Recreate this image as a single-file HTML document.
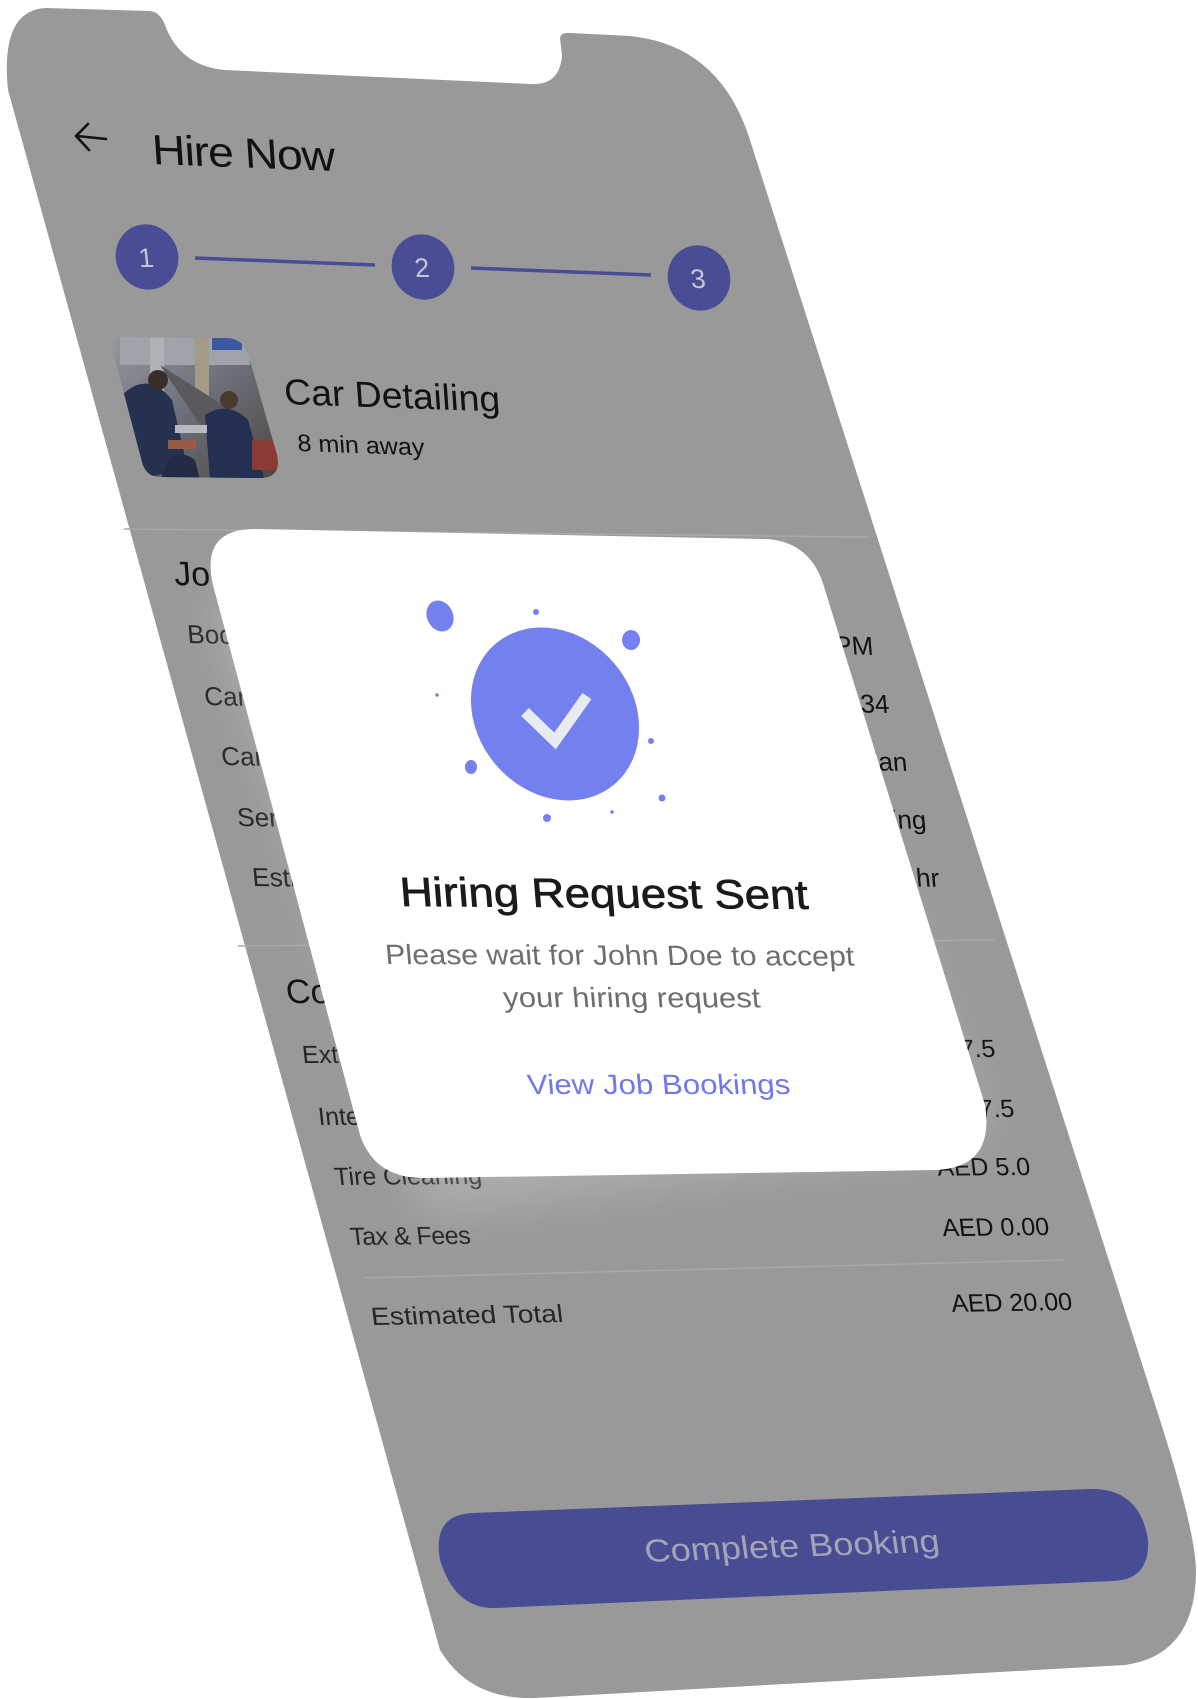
<!DOCTYPE html>
<html><head><meta charset="utf-8"><style>
html,body{margin:0;padding:0;background:#fff;width:1198px;height:1699px;overflow:hidden}
svg{display:block}
text{font-family:"Liberation Sans",sans-serif}
</style></head><body>
<svg width="1198" height="1699" viewBox="0 0 1198 1699" xmlns="http://www.w3.org/2000/svg">
<defs>
<filter id="blur" x="-20%" y="-20%" width="140%" height="140%"><feGaussianBlur stdDeviation="24"/></filter>
<clipPath id="imgclip"><path d="M118 337 L228 338 Q244 339 249 357 L277 455 Q282 478 260 478 L160 477 Q146 477 142 462 L113 352 Q110 337 118 337 Z"/></clipPath>
<linearGradient id="imgbg" x1="0" y1="0" x2="1" y2="1">
<stop offset="0" stop-color="#9a9ca2"/><stop offset="0.5" stop-color="#6a6e78"/><stop offset="1" stop-color="#4a4036"/>
</linearGradient>
</defs>

<!-- phone body -->
<path d="M46 8 L150 11 Q160 12 165 25 Q180 66 225 70 L530 84 Q560 86 562 55 L560 38 Q561 32 570 33 L630 36 Q720 45 750 140 L1160 1420 Q1195 1530 1196 1570 Q1196 1655 1125 1665 L535 1698 Q470 1700 440 1650 L8 90 Q0 10 46 8 Z" fill="#999999"/>

<!-- header -->
<g stroke="#111" stroke-width="2.6" fill="none" stroke-linecap="round" stroke-linejoin="round">
<path d="M106 139 L77 136 M88 124 L76 136 L89 150"/>
</g>
<text transform="translate(153,164) rotate(2.2) skewX(6)" font-size="42" fill="#111" textLength="182" lengthAdjust="spacingAndGlyphs" letter-spacing="-1">Hire Now</text>

<!-- steps -->
<g stroke="#484d95" stroke-width="3.5">
<line x1="195" y1="258" x2="375" y2="265"/>
<line x1="471" y1="268" x2="651" y2="275"/>
</g>
<g fill="#484d95">
<ellipse cx="147" cy="257" rx="31" ry="33" transform="rotate(-25 147 257)"/>
<ellipse cx="423" cy="267" rx="31" ry="33" transform="rotate(-25 423 267)"/>
<ellipse cx="699" cy="278" rx="31" ry="33" transform="rotate(-25 699 278)"/>
</g>
<g fill="#c4c5d4" font-size="27" text-anchor="middle">
<text transform="translate(147,267) skewX(6)">1</text>
<text transform="translate(423,277) skewX(6)">2</text>
<text transform="translate(699,288) skewX(6)">3</text>
</g>

<!-- image -->
<g clip-path="url(#imgclip)">
<rect x="100" y="330" width="190" height="160" fill="url(#imgbg)"/>
<rect x="120" y="335" width="130" height="30" fill="#9fa3aa"/>
<rect x="150" y="335" width="14" height="60" fill="#b0b1b5"/>
<rect x="195" y="335" width="14" height="70" fill="#a49a88"/>
<rect x="212" y="338" width="30" height="12" fill="#3a5aa0"/>
<path d="M160 365 L215 400 L240 420 L200 425 Z" fill="#5a5a5e"/>
<path d="M122 395 Q148 370 172 400 L188 470 L140 478 Z" fill="#263050"/>
<circle cx="158" cy="380" r="10" fill="#3a2e28"/>
<path d="M205 415 Q228 400 248 420 L264 478 L210 478 Z" fill="#243052"/>
<circle cx="229" cy="400" r="9" fill="#4a3a2e"/>
<path d="M168 462 Q180 448 195 460 L200 480 L160 480 Z" fill="#222a45"/>
<rect x="168" y="440" width="28" height="9" fill="#9a5a44"/>
<rect x="252" y="440" width="30" height="30" fill="#8c3a36"/>
<rect x="175" y="425" width="32" height="8" fill="#b8b8c0"/>
</g>

<text transform="translate(285,404) rotate(2) skewX(6)" font-size="36" fill="#111" textLength="216" lengthAdjust="spacingAndGlyphs">Car Detailing</text>
<text transform="translate(298,451) rotate(2) skewX(6)" font-size="24" fill="#111" textLength="127" lengthAdjust="spacingAndGlyphs">8 min away</text>

<line x1="124" y1="529" x2="869" y2="537" stroke="#a9a9a9" stroke-width="1.5"/>

<text transform="translate(175,585) rotate(1.4) skewX(6)" font-size="34" fill="#111">Job Details</text>
<g font-size="26" fill="#262626">
<text transform="translate(188,643) rotate(1.2) skewX(6)">Booking Time</text>
<text transform="translate(205,705) rotate(1.1) skewX(6)">Car Plate</text>
<text transform="translate(222,765) rotate(1) skewX(6)">Car Type</text>
<text transform="translate(238,826) rotate(0.9) skewX(6)">Service</text>
<text transform="translate(253,886) rotate(0.8) skewX(6)">Estimated Time</text>
</g>
<g font-size="26" fill="#111" text-anchor="end">
<text transform="translate(874,655) rotate(1.2) skewX(6)">10:00 PM</text>
<text transform="translate(890,713) rotate(1.1) skewX(6)">ABC 1234</text>
<text transform="translate(908,771) rotate(1) skewX(6)">Sedan</text>
<text transform="translate(927,829) rotate(0.9) skewX(6)">Car Detailing</text>
<text transform="translate(940,887) rotate(0.8) skewX(6)">1 hr</text>
</g>

<line x1="238" y1="946" x2="995" y2="940" stroke="#a9a9a9" stroke-width="1.5"/>

<text transform="translate(287,1003) rotate(0.4) skewX(6)" font-size="34" fill="#111">Cost Breakdown</text>
<g font-size="25" fill="#262626">
<text transform="translate(303,1063) rotate(0) skewX(6)">Exterior Cleaning</text>
<text transform="translate(319,1125) rotate(-0.2) skewX(6)">Interior Cleaning</text>
<text transform="translate(335,1185) rotate(-0.4) skewX(6)">Tire Cleaning</text>
<text transform="translate(351,1245) rotate(-0.6) skewX(6)" letter-spacing="-0.5">Tax &amp; Fees</text>
<text transform="translate(372,1325) rotate(-0.9) skewX(6)" textLength="192" lengthAdjust="spacingAndGlyphs">Estimated Total</text>
</g>
<g font-size="25" fill="#111" text-anchor="end">
<text transform="translate(996,1057) rotate(0) skewX(6)">AED 7.5</text>
<text transform="translate(1015,1117) rotate(-0.2) skewX(6)">AED 7.5</text>
<text transform="translate(1031,1175) rotate(-0.4) skewX(6)">AED 5.0</text>
<text transform="translate(1050,1235) rotate(-0.6) skewX(6)">AED 0.00</text>
<text transform="translate(1073,1310) rotate(-0.9) skewX(6)">AED 20.00</text>
</g>
<line x1="364" y1="1278" x2="1063" y2="1260" stroke="#a9a9a9" stroke-width="1.5"/>

<path d="M472 1513 L1090 1489 Q1140 1488 1148 1540 Q1150 1580 1113 1581 L495 1608 Q455 1609 440 1560 Q432 1515 472 1513 Z" fill="#484c92"/>
<text transform="translate(646,1562) rotate(-2) skewX(6)" font-size="32" fill="#a3a4b8" textLength="295" lengthAdjust="spacingAndGlyphs">Complete Booking</text>

<path d="M255 570 L770 580 L990 1140 L425 1215 L213 610 Z" fill="#ffffff" opacity="0.2" filter="url(#blur)"/>
<path d="M255 529 L765 539 Q812 541 825 590 L985 1105 Q995 1168 935 1170 L425 1178 Q375 1179 360 1135 L213 585 Q200 529 255 529 Z" fill="#ffffff"/>

<g fill="#7580ef">
<ellipse cx="555" cy="714" rx="92" ry="78" transform="rotate(50 555 714)"/>
<ellipse cx="440" cy="616" rx="13" ry="16" transform="rotate(-25 440 616)"/>
<ellipse cx="631" cy="640" rx="9" ry="10"/>
<circle cx="536" cy="612" r="3"/>
<circle cx="437" cy="695" r="1.8"/>
<ellipse cx="471" cy="767" rx="6" ry="7"/>
<circle cx="651" cy="741" r="3"/>
<circle cx="662" cy="798" r="3.5"/>
<circle cx="547" cy="818" r="4"/>
<circle cx="612" cy="812" r="1.8"/>
</g>
<path d="M525 712 L555 741 L587 696" fill="none" stroke="#e9ebf3" stroke-width="11"/>

<text transform="translate(401,906) rotate(0.4) skewX(5)" font-size="41" fill="#1a1a1a" stroke="#1a1a1a" stroke-width="0.7" textLength="408" lengthAdjust="spacingAndGlyphs">Hiring Request Sent</text>
<text transform="translate(386,964) rotate(0.2) skewX(5)" font-size="28" fill="#6e6e6e" textLength="469" lengthAdjust="spacingAndGlyphs">Please wait for John Doe to accept</text>
<text transform="translate(504,1007) rotate(0.1) skewX(5)" font-size="28" fill="#6e6e6e" textLength="257" lengthAdjust="spacingAndGlyphs">your hiring request</text>
<text transform="translate(528,1094) rotate(0) skewX(5)" font-size="28" fill="#6f78ec" textLength="263" lengthAdjust="spacingAndGlyphs">View Job Bookings</text>
</svg>
</body></html>
